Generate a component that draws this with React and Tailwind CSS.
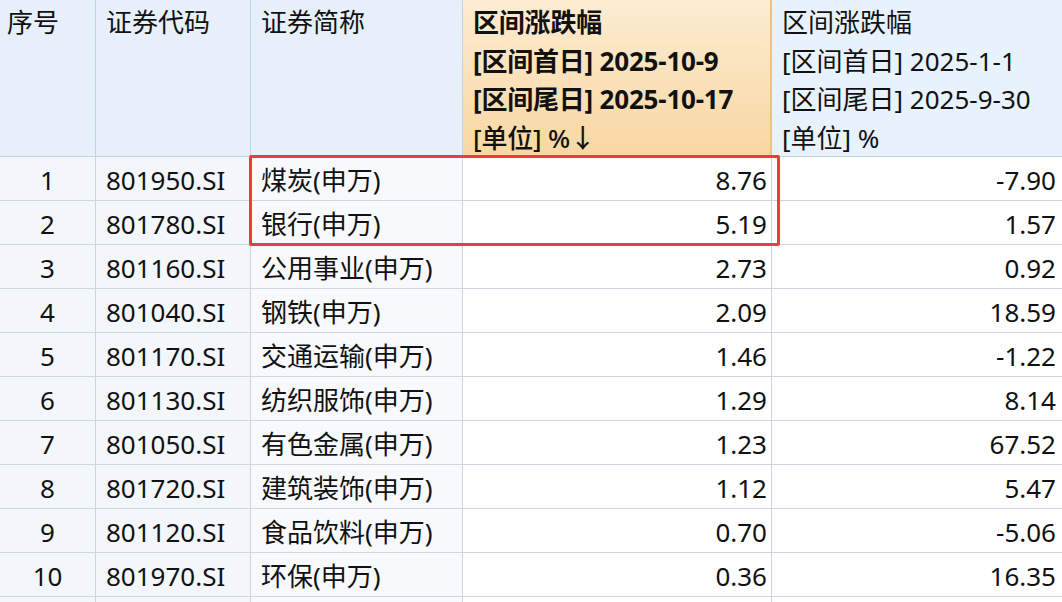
import React from "react";

const rows = [
  ["1", "801950.SI", "煤炭(申万)", "8.76", "-7.90"],
  ["2", "801780.SI", "银行(申万)", "5.19", "1.57"],
  ["3", "801160.SI", "公用事业(申万)", "2.73", "0.92"],
  ["4", "801040.SI", "钢铁(申万)", "2.09", "18.59"],
  ["5", "801170.SI", "交通运输(申万)", "1.46", "-1.22"],
  ["6", "801130.SI", "纺织服饰(申万)", "1.29", "8.14"],
  ["7", "801050.SI", "有色金属(申万)", "1.23", "67.52"],
  ["8", "801720.SI", "建筑装饰(申万)", "1.12", "5.47"],
  ["9", "801120.SI", "食品饮料(申万)", "0.70", "-5.06"],
  ["10", "801970.SI", "环保(申万)", "0.36", "16.35"],
  ["", "", "", "", ""],
];

const font = { fontFamily: '"Noto Sans", "Noto Sans CJK SC", sans-serif' };

export default function App() {
  return (
    <div
      className="relative w-[1062px] h-[602px] overflow-hidden bg-white text-[#111] text-[26px]"
      style={font}
    >
      <div className="grid grid-cols-[96px_155px_212px_309px_290px]">
        {/* header */}
        <div className="h-[157px] bg-[#e6effa] border-r border-b border-[#c3d2e4] pl-[7px] pt-[3px] leading-[38.5px]">
          序号
        </div>
        <div className="h-[157px] bg-[#e6effa] border-r border-b border-[#c3d2e4] pl-[10px] pt-[3px] leading-[38.5px]">
          证券代码
        </div>
        <div className="h-[157px] bg-[#e6effa] border-r border-b border-[#c3d2e4] pl-[10px] pt-[3px] leading-[38.5px]">
          证券简称
        </div>
        <div className="h-[157px] bg-gradient-to-b from-[#fcecd2] to-[#f8d7a2] border-r-2 border-b border-r-[#eec184] border-b-[#c3d2e4] pl-[10px] pt-[3px] leading-[38.5px] font-bold tracking-[-0.2px]">
          <div>区间涨跌幅</div>
          <div>[区间首日] 2025-10-9</div>
          <div>[区间尾日] 2025-10-17</div>
          <div className="font-medium">[单位] %↓</div>
        </div>
        <div className="h-[157px] bg-[#e8f2fc] border-b border-[#c3d2e4] pl-[10px] pt-[3px] leading-[38.5px]">
          <div>区间涨跌幅</div>
          <div>[区间首日] 2025-1-1</div>
          <div>[区间尾日] 2025-9-30</div>
          <div>[单位] %</div>
        </div>

        {/* body */}
        {rows.map((r, i) => (
          <React.Fragment key={i}>
            <div className="h-[44px] bg-[#f3f6fa] border-r border-b border-[#cdd5df] flex items-center justify-center pt-[3px]">
              {r[0]}
            </div>
            <div className="h-[44px] bg-[#f3f6fa] border-r border-b border-[#cdd5df] flex items-center pl-[10px] pt-[3px]">
              {r[1]}
            </div>
            <div className="h-[44px] bg-[#f8f9fc] border-r border-b border-[#cdd5df] flex items-center pl-[10px] pt-[3px]">
              {r[2]}
            </div>
            <div className="h-[44px] bg-white border-r border-b border-[#cdd5df] flex items-center justify-end pr-[4px] pt-[3px]">
              {r[3]}
            </div>
            <div className="h-[44px] bg-white border-b border-[#cdd5df] flex items-center justify-end pr-[6px] pt-[3px]">
              {r[4]}
            </div>
          </React.Fragment>
        ))}
      </div>

      {/* red highlight box */}
      <div className="absolute left-[249px] top-[155px] w-[531px] h-[91px] border-[3px] border-[#ee3b3b] rounded-[2px] pointer-events-none" />
    </div>
  );
}
